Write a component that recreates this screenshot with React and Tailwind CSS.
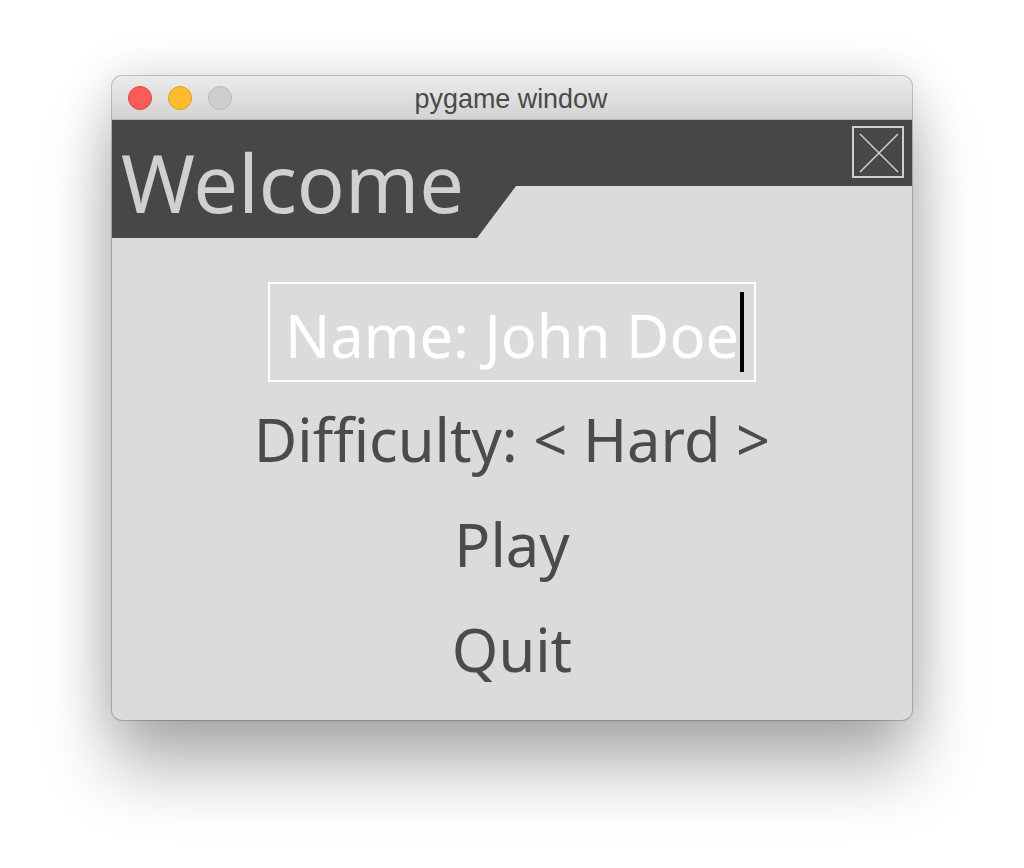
function TrafficLight({ className }) {
  return <span className={`w-6 h-6 rounded-full border ${className}`} />;
}

function MenuRow({ children }) {
  return (
    <div className="h-[105px] flex items-center justify-center text-[59.6px] leading-none text-[#4b4b4b]">
      {children}
    </div>
  );
}

export default function App() {
  return (
    <div className="w-[1024px] h-[868px] bg-white overflow-hidden pt-[76px] pl-[112px] font-['Noto_Sans',sans-serif]">
      <div className="w-[800px] h-[644px] rounded-[10px] overflow-hidden flex flex-col bg-[#dbdbdb] shadow-[0_48px_70px_rgba(0,0,0,0.3),0_0_50px_rgba(0,0,0,0.14),0_0_0_1px_rgba(0,0,0,0.2)]">
        {/* Title bar */}
        <div className="relative h-[44px] flex items-center gap-4 pl-4 bg-gradient-to-b from-[#ebebeb] to-[#d3d3d3] border-b border-[#b5b5b5]">
          <TrafficLight className="bg-[#fc5b57] border-[#e5453f]" />
          <TrafficLight className="bg-[#fdbc2e] border-[#e1a116]" />
          <TrafficLight className="bg-[#cecece] border-[#b9b9b9]" />
          <span className="absolute inset-x-0 top-[10px] pr-[2px] text-center text-[26.9px] leading-none text-[#4a4a4a] font-['Liberation_Sans',sans-serif]">
            pygame window
          </span>
        </div>

        {/* Banner */}
        <div className="relative h-[118px] shrink-0 bg-[#474747] [clip-path:polygon(0_0,100%_0,100%_66px,404px_66px,365px_100%,0_100%)]">
          <div className="pl-[9px] pt-[17px] text-[79.5px] leading-[90px] text-[#d0d0d0]">Welcome</div>
          <svg className="absolute right-[8px] top-[6px] w-[52px] h-[52px]" viewBox="0 0 52 52" fill="none" stroke="#cfcfcf">
            <rect x="1" y="1" width="50" height="50" strokeWidth="2" />
            <path d="M8 8 L46 46 M46 8 L8 46" strokeWidth="1.5" />
          </svg>
        </div>

        {/* Menu */}
        <div className="flex flex-col pt-[44px]">
          <div className="relative self-center w-[488px] h-[100px] mb-[4px] border-2 border-white flex items-center pl-[15px] pt-[6px] text-[59.6px] leading-none text-white">
            Name: John Doe
            <span className="absolute left-[470px] top-[8px] w-1 h-[80px] bg-black" />
          </div>
          <MenuRow>{'Difficulty: < Hard >'}</MenuRow>
          <MenuRow>Play</MenuRow>
          <MenuRow>Quit</MenuRow>
        </div>
      </div>
    </div>
  );
}
